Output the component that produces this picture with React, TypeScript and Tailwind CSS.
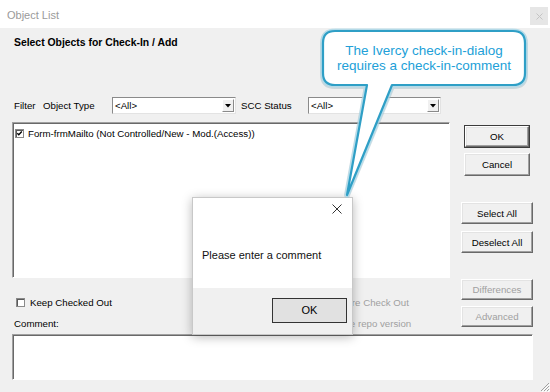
import React from "react";

const btn3d =
  "flex items-center justify-center bg-[#f0f0f0] border border-t-white border-l-white border-r-[#696969] border-b-[#696969] shadow-[inset_-1px_-1px_0_#a0a0a0,inset_1px_1px_0_#e3e3e3]";

function Check({ checked }: { checked?: boolean }) {
  return (
    <svg width="9" height="9" viewBox="0 0 9 9" className="shrink-0">
      <rect x="0.5" y="0.5" width="8" height="8" fill="#fff" stroke="#8a8a8a" />
      <line x1="1" y1="1.5" x2="8" y2="1.5" stroke="#5a5a5a" />
      <line x1="1.5" y1="1" x2="1.5" y2="8" stroke="#5a5a5a" />
      {checked && <path d="M2.3 4.2 L3.8 5.8 L6.8 2.6" fill="none" stroke="#000" strokeWidth="1.4" />}
    </svg>
  );
}

function DropArrow() {
  return (
    <div className="w-[12px] h-[13px] mr-[1px] bg-[#f0f0f0] border border-t-white border-l-white border-r-[#8a8a8a] border-b-[#8a8a8a] flex items-center justify-center">
      <svg width="6" height="4" viewBox="0 0 6 4">
        <path d="M0 0 H6 L3 3.5 Z" fill="#000" />
      </svg>
    </div>
  );
}

export default function App() {
  return (
    <div
      className="relative w-[550px] h-[392px] overflow-hidden bg-[#f0f0f0] text-black"
      style={{ fontFamily: '"Liberation Sans", Arial, sans-serif' }}
    >
      {/* Title bar */}
      <div className="h-[28px] bg-white flex items-start">
        <span className="ml-[7px] mt-[8px] text-[11px] leading-[14px] text-[#9a9a9a]">Object List</span>
        <div className="ml-auto mt-[7px] mr-[2px] w-[18px] h-[18px] bg-[#e6e6e6] flex items-center justify-center">
          <svg width="7" height="7" viewBox="0 0 7 7">
            <path d="M0.5 0.5 L6.5 6.5 M6.5 0.5 L0.5 6.5" stroke="#c4c4c4" strokeWidth="1" />
          </svg>
        </div>
      </div>

      {/* Body */}
      <div className="pl-[12px] text-[9.7px] leading-[13px]">
        <div className="ml-[2px] mt-[8px] text-[10.4px] leading-[14px] font-bold">
          Select Objects for Check-In / Add
        </div>

        {/* Filter row */}
        <div className="mt-[47px] h-[17px] flex items-center">
          <span className="w-[31px] pl-[2px]">Filter</span>
          <span className="w-[69px]">Object Type</span>
          <div className="w-[124px] h-[17px] bg-white border border-t-[#8a8a8a] border-l-[#8a8a8a] border-r-[#e3e3e3] border-b-[#e3e3e3] flex items-center">
            <span className="flex-1 pl-[2px]">&lt;All&gt;</span>
            <DropArrow />
          </div>
          <span className="w-[72px] pl-[5px]">SCC Status</span>
          <div className="w-[133px] h-[17px] bg-white border border-t-[#8a8a8a] border-l-[#8a8a8a] border-r-[#e3e3e3] border-b-[#e3e3e3] flex items-center">
            <span className="flex-1 pl-[2px]">&lt;All&gt;</span>
            <DropArrow />
          </div>
        </div>

        {/* Middle */}
        <div className="mt-[8px] flex">
          <div className="w-[438px] flex flex-col">
            <div className="h-[156px] bg-white border border-t-[#a0a0a0] border-l-[#a0a0a0] border-r-white border-b-white shadow-[inset_1px_1px_0_#696969]">
              <div className="flex items-center pl-[2px] pt-[4px]">
                <Check checked />
                <span className="ml-[4px]">Form-frmMailto (Not Controlled/New - Mod.(Access))</span>
              </div>
            </div>
            <div className="mt-[18px] h-[13px] flex items-center">
              <div className="w-[307px] flex items-center pl-[4px]">
                <Check />
                <span className="ml-[5px]">Keep Checked Out</span>
              </div>
              <Check />
              <span className="ml-[5px] text-[#a0a0a0]">Ignore Check Out</span>
            </div>
            <div className="mt-[8px] h-[13px] flex items-center">
              <div className="w-[312px] pl-[2px]">Comment:</div>
              <Check />
              <span className="ml-[5px] text-[#a0a0a0]">Use repo version</span>
            </div>
          </div>

          <div className="ml-[11px] w-[72px] flex flex-col items-center">
            <div className="mt-[3px] w-[66px] h-[23px] border border-[#3c3c3c] flex">
              <div className={btn3d + " flex-1"}>OK</div>
            </div>
            <div className={btn3d + " mt-[5px] w-[66px] h-[23px]"}>Cancel</div>
            <div className={btn3d + " mt-[26px] w-[72px] h-[22px]"}>Select All</div>
            <div className={btn3d + " mt-[7px] w-[72px] h-[22px]"}>Deselect All</div>
            <div className={btn3d + " mt-[26px] w-[72px] h-[21px] text-[#a0a0a0]"}>Differences</div>
            <div className={btn3d + " mt-[6px] w-[72px] h-[21px] text-[#a0a0a0]"}>Advanced</div>
          </div>
        </div>

        {/* Comment box */}
        <div className="mt-[4px] w-[521px] h-[46px] bg-white border border-t-[#a0a0a0] border-l-[#a0a0a0] border-r-white border-b-white shadow-[inset_1px_1px_0_#696969]" />
      </div>

      {/* Resize grip */}
      <svg className="absolute right-0 bottom-0" width="12" height="12" viewBox="0 0 12 12">
        <path d="M11 3 L3 11 M11 6 L6 11 M11 9 L9 11" stroke="#a0a0a0" strokeWidth="1" />
        <path d="M12 4 L4 12 M12 7 L7 12 M12 10 L10 12" stroke="#ffffff" strokeWidth="1" />
      </svg>

      {/* Message box */}
      <div className="absolute left-[192px] top-[197px] w-[161px] h-[138px] flex flex-col border border-[#c8c8c8] shadow-[0_2px_10px_rgba(0,0,0,0.28)]">
        <div className="h-[90px] bg-white flex flex-col">
          <div className="flex justify-end pt-[6px] pr-[10px]">
            <svg width="10" height="10" viewBox="0 0 10 10">
              <path d="M0.5 0.5 L9.5 9.5 M9.5 0.5 L0.5 9.5" stroke="#333" strokeWidth="1" />
            </svg>
          </div>
          <div className="mt-[34px] pl-[9px] text-[11px] leading-[14px] text-[#111]">Please enter a comment</div>
        </div>
        <div className="flex-1 bg-[#f0f0f0] flex justify-end items-start pr-[5px] pt-[10px]">
          <div className="w-[75px] h-[25px] bg-[#e1e1e1] border border-[#333] flex items-center justify-center text-[11px]">
            OK
          </div>
        </div>
      </div>

      {/* Callout */}
      <svg className="absolute left-0 top-0 pointer-events-none" width="550" height="392" viewBox="0 0 550 392">
        <path
          d="M335 32 H513 Q525 32 525 44 V74 Q525 86 513 86 H392 L347 195 L367 86 H335 Q323 86 323 74 V44 Q323 32 335 32 Z"
          fill="none"
          stroke="#9fb9c4"
          strokeOpacity="0.45"
          strokeWidth="6"
          strokeLinejoin="round"
        />
        <path
          d="M335 31 H513 Q525 31 525 43 V73 Q525 85 513 85 H392 L347 195 L367 85 H335 Q323 85 323 73 V43 Q323 31 335 31 Z"
          fill="none"
          stroke="#a9dcec"
          strokeOpacity="0.7"
          strokeWidth="5"
          strokeLinejoin="round"
        />
        <path
          d="M335 31 H513 Q525 31 525 43 V73 Q525 85 513 85 H392 L347 195 L367 85 H335 Q323 85 323 73 V43 Q323 31 335 31 Z"
          fill="#ffffff"
          stroke="#2f9fc6"
          strokeWidth="2.2"
          strokeLinejoin="round"
        />
      </svg>
      <div className="absolute left-[323px] top-[31px] w-[202px] h-[54px] flex flex-col items-center justify-center text-[13.5px] leading-[15px] text-[#229fd8]">
        <span>The Ivercy check-in-dialog</span>
        <span>requires a check-in-comment</span>
      </div>
    </div>
  );
}
